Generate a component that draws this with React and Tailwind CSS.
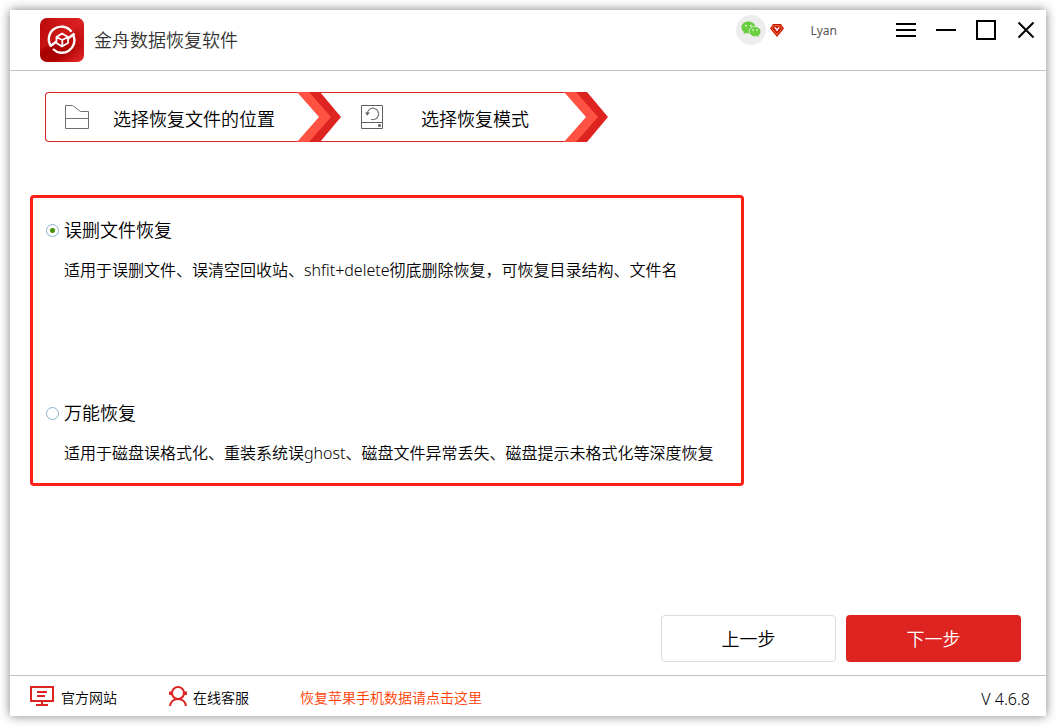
import { useState } from "react";

const modes = [
  {
    id: "deleted",
    title: "误删文件恢复",
    desc: "适用于误删文件、误清空回收站、shfit+delete彻底删除恢复，可恢复目录结构、文件名",
  },
  {
    id: "universal",
    title: "万能恢复",
    desc: "适用于磁盘误格式化、重装系统误ghost、磁盘文件异常丢失、磁盘提示未格式化等深度恢复",
  },
];

function Logo() {
  return (
    <svg width="44" height="44" viewBox="0 0 44 44" fill="none" aria-hidden="true">
      <defs>
        <linearGradient id="logoBg" x1="0.2" y1="0" x2="0.8" y2="1">
          <stop offset="0" stopColor="#b40606" />
          <stop offset="0.15" stopColor="#c00c0c" />
          <stop offset="0.4" stopColor="#c81414" />
          <stop offset="0.52" stopColor="#a80000" />
          <stop offset="0.75" stopColor="#ac0202" />
          <stop offset="1" stopColor="#dc2222" />
        </linearGradient>
        <linearGradient id="logoShine" x1="0.4" y1="0.6" x2="1" y2="0">
          <stop offset="0" stopColor="#dd2222" stopOpacity="0" />
          <stop offset="1" stopColor="#dd2222" />
        </linearGradient>
      </defs>
      <rect width="44" height="44" rx="7" fill="url(#logoBg)" />
      <rect width="44" height="44" rx="7" fill="url(#logoShine)" />
      <g stroke="#fff" strokeWidth="2.4">
        <path d="M11.200 28.500A12.500 12.500 0 0 1 31.500 13.800" />
        <path d="M33.500 17.500A12.500 12.500 0 0 1 13 31" />
        <path d="M10.500 28L16.500 23.500M34.500 15.500L28 20.500" />
      </g>
      <path
        d="M22 15.500L28 19V25L22 28.500L16.500 25V19ZM16.500 19L22.300 22L28 19M22.300 22V28"
        stroke="#fff"
        strokeWidth="1.8"
        strokeLinejoin="round"
      />
    </svg>
  );
}

function WechatIcon() {
  return (
    <svg width="20" height="18" viewBox="0 0 20 18" aria-hidden="true">
      <path d="M7.4 0.6C3.5 0.6 0.4 3.2 0.4 6.5c0 1.900 1 3.500 2.600 4.600L2.400 13.300l2.500-1.300c.8.2 1.600.4 2.500.4 3.900 0 7-2.600 7-5.900S11.300.6 7.400.6z" fill="#69cf3f" />
      <path d="M14 5.400c3.300 0 5.900 2.300 5.900 5.200 0 1.600-.8 2.900-2 3.900l.5 2-2.200-1.100c-.7.2-1.400.3-2.200.3-3.300 0-5.900-2.300-5.900-5.100s2.600-5.200 5.900-5.200z" fill="#69cf3f" stroke="#ededed" strokeWidth="0.8" />
      <g fill="#fff">
        <circle cx="5" cy="4.700" r="0.900" />
        <circle cx="9.800" cy="4.700" r="0.900" />
        <circle cx="12" cy="9" r="0.800" />
        <circle cx="16" cy="9" r="0.800" />
      </g>
    </svg>
  );
}

function GemIcon() {
  return (
    <svg width="14" height="13" viewBox="0 0 14 13" aria-hidden="true">
      <path d="M3 0H11L14 4.500L7 13L0 4.500Z" fill="#cf1010" />
      <path d="M3.600 1.700H10.400L12 4.600L7 10.700L2 4.600Z" fill="none" stroke="#f0a020" strokeWidth="0.800" />
      <path d="M4.200 3.500L7 7.500L9.800 3.500L8.500 3L7 5L5.500 3Z" fill="#fff" />
    </svg>
  );
}

function Chevron() {
  return (
    <svg className="relative z-10 -my-px -mr-[21px] shrink-0" width="44" height="50" viewBox="0 0 44 50" aria-hidden="true">
      <path d="M11 0H23L44 25L23 50H11L33 25Z" fill="#dd2421" />
      <path d="M0 0H12L34 25L12 50H0L22 25Z" fill="#ff5242" />
    </svg>
  );
}

function FolderIcon() {
  return (
    <svg width="24" height="24" viewBox="0 0 24 24" fill="none" stroke="#707070" aria-hidden="true">
      <path d="M0.500 0.500H7.500L15.500 6.500H23.500V23.500H0.500ZM0.500 13.500H23.500" />
    </svg>
  );
}

function DriveIcon() {
  return (
    <svg width="22" height="24" viewBox="0 0 22 24" fill="none" stroke="#606060" aria-hidden="true">
      <path d="M0.500 0.500H21.500V23.500H0.500ZM0.500 17.500H21.500" />
      <path d="M6.200 8.800A5.700 5.700 0 1 1 10 14.300" stroke="#777" strokeWidth="1.200" />
      <path d="M4 7.500L8.800 7.200L6.400 10.800Z" fill="#666" stroke="none" />
      <circle cx="18.500" cy="20.500" r="1.500" fill="#606060" stroke="none" />
    </svg>
  );
}

function MonitorIcon() {
  return (
    <svg width="24" height="20" viewBox="0 0 24 20" fill="none" stroke="#dd2421" strokeWidth="2" aria-hidden="true">
      <path d="M1 1H23V15H1ZM7 6H17M7 10H15M12 15V19M6 19H18" />
    </svg>
  );
}

function ServiceIcon() {
  return (
    <svg width="18" height="20" viewBox="0 0 18 20" fill="none" stroke="#dd2421" strokeWidth="2" aria-hidden="true">
      <circle cx="9" cy="7" r="6" />
      <path d="M1 20C1.500 16 4.500 13 9 13S16.500 16 17 20" />
      <path d="M1.600 5.500V9M16.400 5.500V9" strokeWidth="3" />
    </svg>
  );
}

function App() {
  const [mode, setMode] = useState("deleted");

  return (
    <div className="flex min-h-screen bg-white p-[10px] font-['Noto_Sans','Noto_Sans_CJK_SC',sans-serif] font-[350] text-black">
      <div className="flex w-full flex-col bg-white shadow-[0_0_10px_rgba(0,0,0,0.5)]">
        <header className="flex justify-between border-b border-[#c3c3c3] pr-[10px] pl-[30px]">
          <div className="flex h-[60px] items-center gap-[10px]">
            <Logo />
            <h1 className="text-lg font-[350] text-[#333]">金舟数据恢复软件</h1>
          </div>

          <div className="flex h-10 items-center">
            <span className="flex size-[30px] items-center justify-center rounded-full bg-[#ededed]">
              <WechatIcon />
            </span>
            <span className="ml-1">
              <GemIcon />
            </span>
            <span className="ml-[26px] pt-[2px] text-xs font-normal text-[#555]">Lyan</span>

            <div className="ml-[59px] flex gap-5">
              <button type="button" aria-label="菜单">
                <svg width="20" height="20" stroke="#000" strokeWidth="2"><path d="M0 4H20M0 10H20M0 16H20" /></svg>
              </button>
              <button type="button" aria-label="最小化">
                <svg width="20" height="20" stroke="#000" strokeWidth="2"><path d="M0 10H20" /></svg>
              </button>
              <button type="button" aria-label="最大化">
                <svg width="20" height="20" fill="none" stroke="#000" strokeWidth="2"><path d="M1 1H19V19H1Z" /></svg>
              </button>
              <button type="button" aria-label="关闭">
                <svg width="20" height="20" stroke="#000" strokeWidth="2"><path d="M2.500 2.500L17.500 17.500M17.500 2.500L2.500 17.500" /></svg>
              </button>
            </div>
          </div>
        </header>

        <main className="flex grow flex-col px-5">
          <ol className="mt-[21px] ml-[15px] flex text-lg">
            <li className="flex h-[50px] items-center rounded-l border-y border-l border-[#dd2421] pl-[19px]">
              <FolderIcon />
              <span className="ml-6 pt-[3px] pr-[22px]">选择恢复文件的位置</span>
              <Chevron />
            </li>
            <li className="flex h-[50px] items-center border-y border-[#dd2421] pl-[41px]">
              <DriveIcon />
              <span className="ml-[38px] pt-[3px] pr-[35px]">选择恢复模式</span>
              <Chevron />
            </li>
          </ol>

          <div className="mt-[53px] flex w-full max-w-[714px] flex-col gap-[117px] rounded-[4px] border-3 border-[#ff1f14] px-[13px] py-[18px]">
            {modes.map((m) => (
              <div key={m.id}>
                <label className="flex items-center gap-[5px] text-lg">
                  <input
                    type="radio"
                    name="mode"
                    value={m.id}
                    checked={mode === m.id}
                    onChange={() => setMode(m.id)}
                    className="size-[13px] appearance-none rounded-full border border-[#8ab0cc] bg-white checked:bg-[radial-gradient(circle,#4a9a06_0,#3f8a00_2px,#fff_3px)]"
                  />
                  {m.title}
                </label>
                <p className="mt-[14px] pl-[18px] text-base">{m.desc}</p>
              </div>
            ))}
          </div>

          <div className="mt-auto flex justify-end gap-[10px] pr-[5px] pb-[13px] text-lg">
            <button type="button" className="h-[47px] w-[175px] rounded border border-[#dcdcdc] bg-white">上一步</button>
            <button type="button" className="h-[47px] w-[175px] rounded bg-[#dd2421] text-white">下一步</button>
          </div>
        </main>

        <footer className="flex h-[41px] items-center border-t border-[#c3c3c3] pr-4 pl-5 text-sm">
          <a href="#site" className="flex items-center gap-[7px]">
            <MonitorIcon />
            <span className="pt-[3px]">官方网站</span>
          </a>
          <a href="#service" className="ml-[52px] flex items-center gap-[6px]">
            <ServiceIcon />
            <span className="pt-[3px]">在线客服</span>
          </a>
          <a href="#iphone" className="ml-[51px] pt-[3px] text-[#ff3c00]">恢复苹果手机数据请点击这里</a>
          <span className="ml-auto pt-[6px] text-base">V 4.6.8</span>
        </footer>
      </div>
    </div>
  );
}

export default App;
